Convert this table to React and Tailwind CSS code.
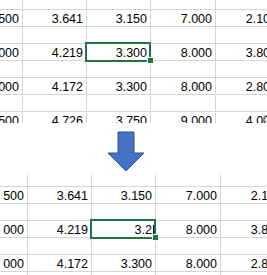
import React from "react";

const topRows = [
  null,
  ["2.500", "3.641", "3.150", "7.000", "2.100"],
  null,
  ["3.000", "4.219", "3.300", "8.000", "3.800"],
  null,
  ["3.000", "4.172", "3.300", "8.000", "2.800"],
  null,
  ["2.500", "4.726", "3.750", "9.000", "4.000"],
];

const bottomRows = [
  ["500", "3.641", "3.150", "7.000", "2.100"],
  null,
  ["000", "4.219", "EDIT", "8.000", "3.800"],
  null,
  ["000", "4.172", "3.300", "8.000", "2.800"],
  null,
];

const widthCls = ["w-[65px]", "w-[64px]", "w-[64px]", "w-[65px]", "w-[65px]"];

function Cell({ i, value }) {
  return (
    <div
      className={`${widthCls[i]} shrink-0 box-border h-full border-r border-b border-[#d4d4d4] text-right whitespace-nowrap leading-[18px] ${
        value === "EDIT" ? "pr-[1px]" : "pr-[3px]"
      }`}
    >
      {value === "EDIT" ? (
        <span className="inline-flex items-start justify-end">
          <span>3.2</span>
          <span className="ml-[1px] mt-[4px] inline-block h-[11px] w-px bg-black" />
        </span>
      ) : (
        value
      )}
    </div>
  );
}

function Row({ cells, h = "h-[17px]" }) {
  return (
    <div className={`flex ${h}`}>
      {[0, 1, 2, 3, 4].map((i) => (
        <Cell key={i} i={i} value={cells ? cells[i] : ""} />
      ))}
    </div>
  );
}

export default function App() {
  return (
    <div
      className="relative w-[267px] h-[275px] overflow-hidden bg-white text-black text-[12.5px]"
      style={{ fontFamily: '"Liberation Sans", Arial, sans-serif' }}
    >
      {/* top screenshot */}
      <div className="relative h-[123px] overflow-hidden">
        <div className="-mt-[7px] -ml-[42px] flex flex-col">
          {topRows.map((r, k) => (
            <Row key={k} cells={r} />
          ))}
        </div>
        <div className="absolute left-[85px] top-[42px] h-[20px] w-[66px] border-2 border-[#217346]" />
        <div className="absolute left-[148px] top-[58px] h-[5px] w-[5px] bg-[#217346] outline outline-1 outline-white" />
        <svg className="absolute left-[262px] top-[114px]" width="5" height="9" viewBox="0 0 5 9">
          <path d="M4 1 L1 4.5 L4 8" fill="none" stroke="#9a9a9a" strokeWidth="1.5" />
        </svg>
      </div>

      {/* arrow */}
      <div className="relative z-10 h-[44px]">
        <svg className="ml-[107px] mt-[8px] overflow-visible" width="39" height="41" viewBox="0 0 39 41">
          <polygon
            points="11,1 27,1 27,22 37,22 19,40 1,22 11,22"
            fill="#4472C4"
            stroke="#2F528F"
            strokeWidth="1"
          />
        </svg>
      </div>

      {/* bottom screenshot */}
      <div className="relative h-[108px] overflow-hidden">
        <div className="-ml-[37px] flex flex-col">
          <Row cells={null} h="h-[12px]" />
          {bottomRows.map((r, k) => (
            <Row key={k} cells={r} />
          ))}
        </div>
        <div className="absolute left-[90px] top-[44px] h-[20px] w-[66px] border-2 border-[#217346]" />
        <div className="absolute left-[153px] top-[60px] h-[5px] w-[5px] bg-[#217346] outline outline-1 outline-white" />
      </div>
    </div>
  );
}
